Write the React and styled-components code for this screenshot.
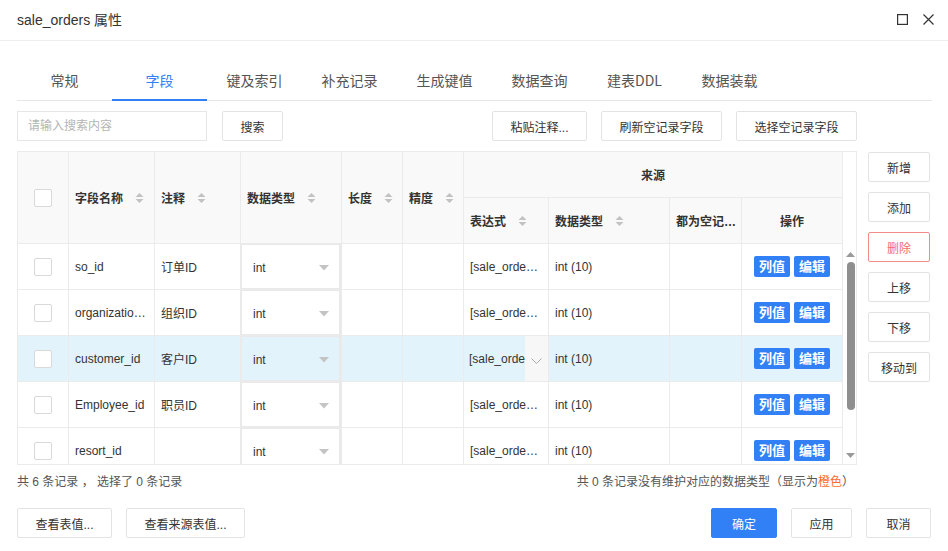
import React from "react";
import styled, { createGlobalStyle } from "styled-components";

const BLUE = "#3180f6";
const LINE = "#ebebeb";

const GlobalStyle = createGlobalStyle`
  * { box-sizing: border-box; }
  body {
    margin: 0;
    background: #fff;
    font-family: "Liberation Sans", Arial, "Noto Sans CJK SC", sans-serif;
    color: #333;
  }
`;

const columns = [51, 86, 86, 101, 61, 61, 85, 121, 72, 100];

const rows = [
  { name: "so_id", note: "订单ID" },
  { name: "organization_id", note: "组织ID" },
  { name: "customer_id", note: "客户ID", active: true },
  { name: "Employee_id", note: "职员ID" },
  { name: "resort_id", note: "" },
];

const tabs = ["常规", "字段", "键及索引", "补充记录", "生成键值", "数据查询", "建表DDL", "数据装载"];
const sideButtons = ["新增", "添加", "删除", "上移", "下移", "移动到"];

function SortIcon() {
  return (
    <svg width="9" height="12" viewBox="0 0 9 12">
      <polygon points="0.5,5 4.5,1 8.5,5" fill="#c2c2c2" />
      <polygon points="0.5,7 4.5,11 8.5,7" fill="#c2c2c2" />
    </svg>
  );
}

export default function App() {
  return (
    <>
      <GlobalStyle />
      <Dialog>
        <Header>
          <Title>sale_orders 属性</Title>
          <HeaderIcons>
            <svg width="11" height="11" viewBox="0 0 11 11">
              <rect x="0.6" y="0.6" width="9.8" height="9.8" fill="none" stroke="#333" strokeWidth="1.2" />
            </svg>
            <svg width="11" height="11" viewBox="0 0 11 11">
              <path d="M0.5 0.5 L10.5 10.5 M10.5 0.5 L0.5 10.5" stroke="#333" strokeWidth="1.2" />
            </svg>
          </HeaderIcons>
        </Header>

        <Body>
          <TabBar>
            {tabs.map((t) => (
              <Tab key={t} $active={t === "字段"}>
                {t}
              </Tab>
            ))}
          </TabBar>

          <Toolbar>
            <SearchInput placeholder="请输入搜索内容" />
            <Button $w={61}>搜索</Button>
            <Spacer />
            <Button $w={95}>粘贴注释...</Button>
            <Button $w={121}>刷新空记录字段</Button>
            <Button $w={121}>选择空记录字段</Button>
          </Toolbar>

          <Main>
            <TableFrame>
              <Grid>
                <colgroup>
                  {columns.map((w, i) => (
                    <col key={i} style={{ width: w }} />
                  ))}
                </colgroup>
                <thead>
                  <HeadRow>
                    <Th rowSpan={2} $center>
                      <Checkbox />
                    </Th>
                    {["字段名称", "注释", "数据类型", "长度", "精度"].map((h) => (
                      <Th key={h} rowSpan={2}>
                        <HeadLabel>
                          {h}
                          <SortIcon />
                        </HeadLabel>
                      </Th>
                    ))}
                    <Th colSpan={4} $center>
                      来源
                    </Th>
                  </HeadRow>
                  <HeadRow>
                    <Th>
                      <HeadLabel>
                        表达式
                        <SortIcon />
                      </HeadLabel>
                    </Th>
                    <Th>
                      <HeadLabel>
                        数据类型
                        <SortIcon />
                      </HeadLabel>
                    </Th>
                    <Th $tight>
                      <Ellipsis>都为空记录字段</Ellipsis>
                    </Th>
                    <Th $center>操作</Th>
                  </HeadRow>
                </thead>
                <tbody>
                  {rows.map((r) => (
                    <Row key={r.name} $active={r.active}>
                      <Td $center>
                        <Checkbox />
                      </Td>
                      <Td>
                        <Ellipsis>{r.name}</Ellipsis>
                      </Td>
                      <Td>{r.note}</Td>
                      <Td $flush>
                        <Select>
                          int
                          <svg width="10" height="6" viewBox="0 0 10 6">
                            <polygon points="0,0 10,0 5,5.5" fill="#c4c4c4" />
                          </svg>
                        </Select>
                      </Td>
                      <Td />
                      <Td />
                      {r.active ? (
                        <Td $flush>
                          <ExprEditor>
                            <ExprText>[sale_orders].[customer_id]</ExprText>
                            <ChevronBox>
                              <svg width="11" height="7" viewBox="0 0 11 7">
                                <path d="M0.5 0.5 L5.5 5.5 L10.5 0.5" fill="none" stroke="#aaa" strokeWidth="1" />
                              </svg>
                            </ChevronBox>
                          </ExprEditor>
                        </Td>
                      ) : (
                        <Td>
                          <Ellipsis>[sale_orders].[{r.name}]</Ellipsis>
                        </Td>
                      )}
                      <Td>int (10)</Td>
                      <Td />
                      <Td $center>
                        <Actions>
                          <ActionButton>列值</ActionButton>
                          <ActionButton>编辑</ActionButton>
                        </Actions>
                      </Td>
                    </Row>
                  ))}
                </tbody>
              </Grid>
              <ScrollColumn>
                <ScrollHead />
                <ScrollTrack>
                  <svg width="9" height="5" viewBox="0 0 9 5">
                    <polygon points="0,5 9,5 4.5,0" fill="#9a9a9a" />
                  </svg>
                  <Thumb />
                  <Spacer />
                  <svg width="9" height="5" viewBox="0 0 9 5">
                    <polygon points="0,0 9,0 4.5,5" fill="#9a9a9a" />
                  </svg>
                </ScrollTrack>
              </ScrollColumn>
            </TableFrame>

            <SideBar>
              {sideButtons.map((b) => (
                <Button key={b} $w={62} $danger={b === "删除"}>
                  {b}
                </Button>
              ))}
            </SideBar>
          </Main>

          <StatusLine>
            <span>共 6 条记录 ， 选择了 0 条记录</span>
            <span>
              共 0 条记录没有维护对应的数据类型（显示为<Orange>橙色</Orange>）
            </span>
          </StatusLine>
        </Body>

        <Footer>
          <Button $w={95}>查看表值...</Button>
          <Button $w={119}>查看来源表值...</Button>
          <Spacer />
          <Button $w={66} $primary>
            确定
          </Button>
          <Button $w={61}>应用</Button>
          <Button $w={65}>取消</Button>
        </Footer>
      </Dialog>
    </>
  );
}

const Dialog = styled.div`
  width: 948px;
  height: 551px;
  display: flex;
  flex-direction: column;
  background: #fff;
  overflow: hidden;
`;

const Header = styled.div`
  height: 41px;
  flex-shrink: 0;
  display: flex;
  align-items: center;
  justify-content: space-between;
  padding: 0 14px 2px 17px;
  border-bottom: 1px solid #eeeeee;
`;

const Title = styled.div`
  font-size: 14px;
  color: #333;
`;

const HeaderIcons = styled.div`
  display: flex;
  align-items: center;
  gap: 15px;
`;

const Body = styled.div`
  flex: 1;
  display: flex;
  flex-direction: column;
  padding: 19px 16px 0 17px;
`;

const TabBar = styled.div`
  display: flex;
  height: 41px;
  border-bottom: 1px solid #e6e6e6;
`;

const Tab = styled.div`
  width: 95px;
  height: 41px;
  margin-bottom: -1px;
  display: flex;
  align-items: center;
  justify-content: center;
  padding-top: 1px;
  font-size: 14px;
  font-family: "Noto Sans CJK SC", sans-serif;
  color: ${(p) => (p.$active ? BLUE : "#555")};
  border-bottom: 2px solid ${(p) => (p.$active ? BLUE : "transparent")};
`;

const Toolbar = styled.div`
  width: 840px;
  margin-top: 10px;
  display: flex;
  align-items: center;
  gap: 14px;
`;

const SearchInput = styled.input`
  width: 190px;
  height: 30px;
  border: 1px solid #e6e6e6;
  padding: 0 10px;
  font-size: 12px;
  font-family: inherit;
  outline: none;
  margin-right: 1px;

  &::placeholder {
    color: #b5b5b5;
  }
`;

const Spacer = styled.div`
  flex: 1;
`;

const Button = styled.button`
  width: ${(p) => p.$w}px;
  height: 30px;
  flex-shrink: 0;
  padding: 0;
  font-size: 12px;
  font-family: inherit;
  border-radius: 2px;
  cursor: pointer;
  background: ${(p) => (p.$primary ? BLUE : "#fff")};
  color: ${(p) => (p.$primary ? "#fff" : p.$danger ? "#f46b6b" : "#333")};
  border: 1px solid ${(p) => (p.$primary ? BLUE : p.$danger ? "#f38b8b" : "#e3e3e3")};
`;

const Main = styled.div`
  margin-top: 10px;
  display: flex;
  align-items: flex-start;
  gap: 11px;
`;

const TableFrame = styled.div`
  width: 840px;
  height: 314px;
  display: flex;
  border: 1px solid ${LINE};
  overflow: hidden;
`;

const Grid = styled.table`
  width: 824px;
  table-layout: fixed;
  border-collapse: separate;
  border-spacing: 0;
  font-size: 12px;
  flex-shrink: 0;
  align-self: flex-start;
`;

const HeadRow = styled.tr`
  height: 46px;
`;

const Th = styled.th`
  background: #f9f9f9;
  font-weight: bold;
  color: #333;
  text-align: ${(p) => (p.$center ? "center" : "left")};
  padding: ${(p) => (p.$tight ? "0 2px 0 6px" : "0 6px")};
  border-right: 1px solid ${LINE};
  border-bottom: 1px solid ${LINE};
  white-space: nowrap;
  overflow: hidden;
  vertical-align: middle;

  &:last-child {
    border-right: none;
  }
`;

const HeadLabel = styled.div`
  display: flex;
  align-items: center;
  gap: 12px;
`;

const Row = styled.tr`
  height: 46px;
  background: ${(p) => (p.$active ? "#e3f3fc" : "#fff")};
`;

const Td = styled.td`
  height: 46px;
  padding: ${(p) => (p.$flush ? "0" : "0 6px")};
  text-align: ${(p) => (p.$center ? "center" : "left")};
  color: #333;
  border-right: 1px solid ${LINE};
  border-bottom: 1px solid ${LINE};
  white-space: nowrap;
  overflow: hidden;
  vertical-align: middle;

  &:last-child {
    border-right: none;
  }
`;

const Ellipsis = styled.div`
  overflow: hidden;
  text-overflow: ellipsis;
  white-space: nowrap;
`;

const Checkbox = styled.span`
  display: inline-block;
  width: 18px;
  height: 18px;
  vertical-align: middle;
  border: 1px solid #d9d9d9;
  border-radius: 2px;
  background: #fff;
`;

const Select = styled.div`
  height: 45px;
  display: flex;
  align-items: center;
  justify-content: space-between;
  padding: 2px 10px 0 11px;
  border: 1px solid #e9e9e9;
  border-width: 1px 2px 1px 1px;
`;

const ExprEditor = styled.div`
  height: 45px;
  display: flex;
  align-items: stretch;
`;

const ExprText = styled.div`
  flex: 1;
  overflow: hidden;
  white-space: nowrap;
  padding-left: 5px;
  display: flex;
  align-items: center;
`;

const ChevronBox = styled.div`
  width: 23px;
  flex-shrink: 0;
  background: #f7f7f7;
  display: flex;
  align-items: center;
  justify-content: center;
  padding-top: 5px;
`;

const Actions = styled.div`
  display: flex;
  justify-content: center;
  gap: 4px;
`;

const ActionButton = styled.span`
  width: 36px;
  height: 21px;
  line-height: 21px;
  border-radius: 2px;
  background: ${BLUE};
  color: #fff;
  font-size: 13px;
  font-weight: bold;
  text-align: center;
`;

const ScrollColumn = styled.div`
  width: 16px;
  flex-shrink: 0;
  border-left: 1px solid ${LINE};
  display: flex;
  flex-direction: column;
`;

const ScrollHead = styled.div`
  height: 92px;
  flex-shrink: 0;
`;

const ScrollTrack = styled.div`
  flex: 1;
  display: flex;
  flex-direction: column;
  align-items: center;
  padding: 8px 0 6px;
`;

const Thumb = styled.div`
  width: 8px;
  height: 148px;
  margin-top: 5px;
  border-radius: 4px;
  background: #8f8f8f;
`;

const SideBar = styled.div`
  display: flex;
  flex-direction: column;
  gap: 10px;
  padding-top: 1px;
`;

const StatusLine = styled.div`
  width: 840px;
  height: 30px;
  padding-right: 3px;
  display: flex;
  align-items: center;
  justify-content: space-between;
  font-size: 12px;
  color: #555;
`;

const Orange = styled.span`
  color: #ff6a2a;
`;

const Footer = styled.div`
  height: 36px;
  flex-shrink: 0;
  display: flex;
  align-items: flex-start;
  gap: 14px;
  padding: 0 17px 0 17px;
  margin-bottom: 7px;
`;
